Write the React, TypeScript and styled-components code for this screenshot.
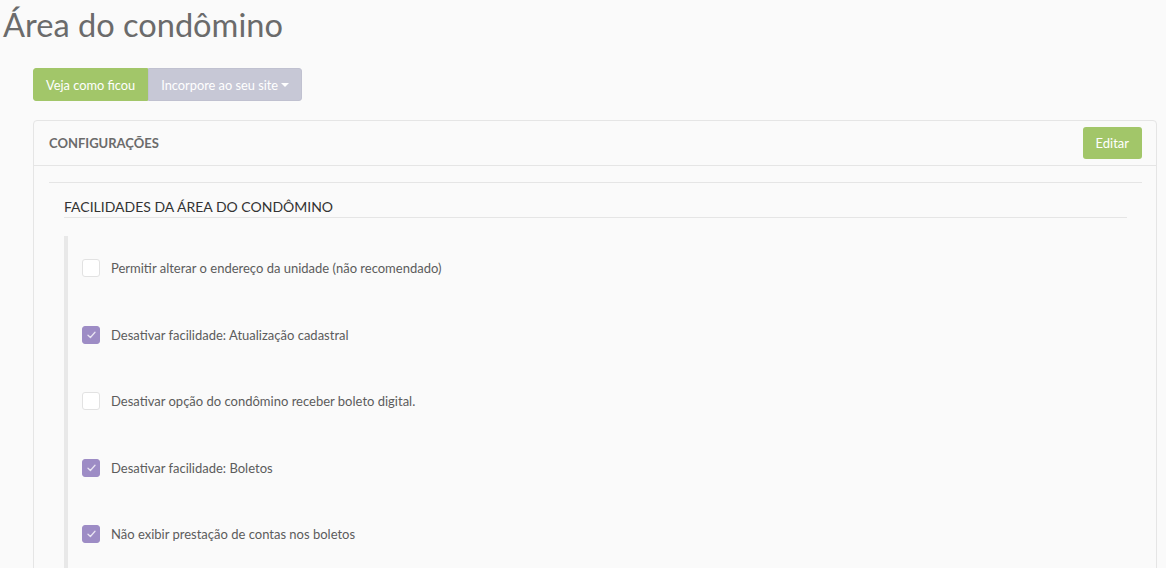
import styled, { createGlobalStyle } from "styled-components";

const GlobalStyle = createGlobalStyle`
  body {
    margin: 0;
    background: #fafafa;
    font-family: Lato, "Open Sans", sans-serif;
    color: #555;
  }
`;

const items = [
  { label: "Permitir alterar o endereço da unidade (não recomendado)", checked: false },
  { label: "Desativar facilidade: Atualização cadastral", checked: true },
  { label: "Desativar opção do condômino receber boleto digital.", checked: false },
  { label: "Desativar facilidade: Boletos", checked: true },
  { label: "Não exibir prestação de contas nos boletos", checked: true },
];

const App = () => {
  return (
    <Page>
      <GlobalStyle />
      <Title>Área do condômino</Title>
      <Content>
        <ButtonGroup>
          <Button variant="green">Veja como ficou</Button>
          <Button variant="gray">
            Incorpore ao seu site <Caret />
          </Button>
        </ButtonGroup>
        <Panel>
          <PanelHeader>
            <PanelTitle>CONFIGURAÇÕES</PanelTitle>
            <EditButton>Editar</EditButton>
          </PanelHeader>
          <PanelBody>
            <Divider />
            <Section>
              <SectionTitle>FACILIDADES DA ÁREA DO CONDÔMINO</SectionTitle>
              <List>
                {items.map((item) => (
                  <Row key={item.label}>
                    <Box checked={item.checked}>
                      {item.checked && (
                        <svg width="9" height="8" viewBox="0 0 9 8">
                          <path
                            d="M1 4.3 L3.4 6.5 L8 1.3"
                            fill="none"
                            stroke="#e8e4f2"
                            strokeWidth="1.3"
                            strokeLinecap="round"
                            strokeLinejoin="round"
                          />
                        </svg>
                      )}
                    </Box>
                    <Label>{item.label}</Label>
                  </Row>
                ))}
              </List>
            </Section>
          </PanelBody>
        </Panel>
      </Content>
    </Page>
  );
};

const Page = styled.div`
  height: 568px;
  overflow: hidden;
`;

const Title = styled.h1`
  margin: 0;
  padding: 5px 0 0 3px;
  font-size: 32.6px;
  font-weight: 400;
  line-height: 40px;
  color: #6b6b6b;
`;

const Content = styled.div`
  padding: 23px 9px 0 33px;
`;

const ButtonGroup = styled.div`
  display: flex;
`;

const Button = styled.div<{ variant: "green" | "gray" }>`
  display: flex;
  align-items: center;
  box-sizing: border-box;
  height: 33px;
  padding: 0 12px;
  font-size: 12.8px;
  color: #fff;
  background: ${({ variant }) => (variant === "green" ? "#a2c669" : "#c7c8d6")};
  border-radius: ${({ variant }) => (variant === "green" ? "3px 0 0 3px" : "0 3px 3px 0")};
  border: 1px solid ${({ variant }) => (variant === "green" ? "#a2c669" : "#c0c1d0")};
`;

const Caret = styled.span`
  display: inline-block;
  margin-left: 3px;
  border-left: 4px solid transparent;
  border-right: 4px solid transparent;
  border-top: 4px solid #fff;
`;

const Panel = styled.div`
  margin-top: 19px;
  border: 1px solid #e5e5e5;
  border-radius: 4px;
  background: #fafafa;
  height: 600px;
`;

const PanelHeader = styled.div`
  display: flex;
  align-items: center;
  justify-content: space-between;
  height: 44px;
  padding: 0 14px 0 15px;
  border-bottom: 1px solid #e5e5e5;
`;

const PanelTitle = styled.div`
  font-size: 13px;
  font-weight: 700;
  color: #6b6b6b;
`;

const EditButton = styled.div`
  display: flex;
  align-items: center;
  height: 32px;
  padding: 0 13px;
  font-size: 13px;
  color: #fff;
  background: #a2c669;
  border-radius: 3px;
`;

const PanelBody = styled.div`
  padding: 16px 14px 0 15px;
`;

const Divider = styled.div`
  height: 1px;
  background: #e5e5e5;
`;

const Section = styled.div`
  padding: 0 15px;
`;

const SectionTitle = styled.div`
  padding: 15px 0 2px;
  font-size: 14px;
  color: #333;
  border-bottom: 1px solid #e5e5e5;
`;

const List = styled.div`
  margin-top: 18px;
  border-left: 4px solid #e8e8e8;
  padding: 23px 0 40px 14px;
  display: flex;
  flex-direction: column;
  gap: 48.6px;
`;

const Row = styled.div`
  display: flex;
  align-items: center;
  height: 18px;
`;

const Box = styled.div<{ checked: boolean }>`
  display: flex;
  align-items: center;
  justify-content: center;
  box-sizing: border-box;
  width: 18px;
  height: 18px;
  border-radius: 3px;
  border: 1px solid ${({ checked }) => (checked ? "#9d8cc5" : "#e2e2e2")};
  background: ${({ checked }) => (checked ? "#9d8cc5" : "#fff")};
`;

const Label = styled.span`
  margin-left: 11px;
  font-size: 13px;
  color: #5c5c5c;
`;

export default App;
